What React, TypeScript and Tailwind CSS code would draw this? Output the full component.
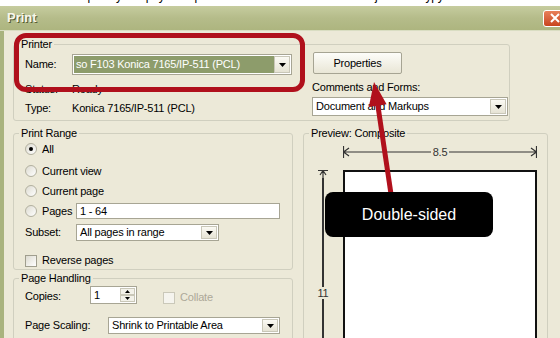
import React from 'react';

function Tri({ up }: { up?: boolean }) {
  return (
    <svg width="7" height="4" viewBox="0 0 7 4">
      <path d={up ? 'M0 4h7L3.5 0z' : 'M0 0h7L3.5 4z'} fill="#000" />
    </svg>
  );
}

function DropBtn() {
  return (
    <div className="flex h-full w-[16px] shrink-0 items-center justify-center border border-[#c9c7b8] bg-gradient-to-b from-[#fbfaf4] to-[#e6e3d4]">
      <Tri />
    </div>
  );
}

function Select({ className, text, hl }: { className: string; text: string; hl?: boolean }) {
  return (
    <div className={`flex items-center border border-[#a7a594] bg-white p-[1px] ${className}`}>
      <span
        className={`flex h-full flex-1 items-center overflow-hidden whitespace-nowrap pl-[2px] ${
          hl ? 'bg-[#8d9c6b] text-white' : ''
        }`}
      >
        {text}
      </span>
      <DropBtn />
    </div>
  );
}

function Radio({ on }: { on?: boolean }) {
  return (
    <div className="flex h-[12px] w-[12px] shrink-0 items-center justify-center rounded-full border border-[#b2b09f] bg-gradient-to-br from-[#dddbd0] to-white">
      {on && <div className="h-[4px] w-[4px] rounded-full bg-black" />}
    </div>
  );
}

function Check({ off }: { off?: boolean }) {
  return (
    <div
      className={`h-[12px] w-[12px] shrink-0 border ${
        off ? 'border-[#cac8b9] bg-[#f5f4ee]' : 'border-[#a09e8e] bg-gradient-to-br from-[#dddbd0] to-white'
      }`}
    />
  );
}

function Group({ title, className, children }: { title: string; className: string; children: React.ReactNode }) {
  return (
    <fieldset className={`rounded-[3px] border border-[#d0cfbf] ${className}`}>
      <legend className="ml-[5px] px-[2px] leading-[13px]">{title}</legend>
      {children}
    </fieldset>
  );
}

function RadioRow({ label, on, className }: { label: string; on?: boolean; className: string }) {
  return (
    <div className={`flex h-[16px] items-center gap-[5px] pl-[11px] ${className}`}>
      <Radio on={on} />
      <span>{label}</span>
    </div>
  );
}

export default function App() {
  return (
    <div className="relative h-[338px] w-[560px] overflow-hidden bg-white font-['Liberation_Sans',Arial,sans-serif] text-[11px] tracking-[-0.2px] text-black">
      {/* page text above the dialog, cut off */}
      <div className="h-[6px] overflow-hidden bg-white">
        <div className="-mt-[11px] flex whitespace-nowrap text-[12px] leading-[14px]">
          <span className="ml-[10px]">the button</span>
          <span className="ml-[26px]">p</span>
          <span className="ml-[22px]">y</span>
          <span className="ml-[24px]">pay</span>
          <span className="ml-[30px]">p</span>
          <span className="ml-[174px]">j</span>
          <span className="ml-[48px]">ypy</span>
        </div>
      </div>

      {/* title bar */}
      <div className="flex h-[25px] items-center justify-between border-b border-[#d9ddc2] bg-gradient-to-b from-[#c6cc9f] via-[#b5bc8a] to-[#adb57f] pl-[7px]">
        <span className="text-[13px] font-bold tracking-normal text-[#f7f7ec] [text-shadow:1px_1px_0_#555b33]">
          Print
        </span>
        <div className="mr-[-6px] flex h-[17px] w-[23px] items-center justify-center rounded-[3px] border border-white bg-gradient-to-b from-[#e8805a] to-[#c8441c]">
          <svg width="10" height="10" viewBox="0 0 10 10">
            <path d="M1 1l8 8M9 1l-8 8" stroke="#fff" strokeWidth="2" />
          </svg>
        </div>
      </div>

      {/* dialog body */}
      <div className="flex h-full flex-col border-l-[4px] border-[#a9b37e] bg-[#ece9d8] pl-[9px] pt-[7px]">
        <Group title="Printer" className="w-[497px]">
          <div className="flex">
            <div className="w-[278px] pl-[11px] pt-[3px] pb-[5px]">
              <div className="flex h-[21px] items-center">
                <span className="w-[47px]">Name:</span>
                <Select className="h-[21px] w-[220px]" text="so F103 Konica 7165/IP-511 (PCL)" hl />
              </div>
              <div className="mt-[7px] flex h-[14px] items-center">
                <span className="w-[47px]">Status:</span>
                <span>Ready</span>
              </div>
              <div className="mt-[5px] flex h-[14px] items-center">
                <span className="w-[47px]">Type:</span>
                <span>Konica 7165/IP-511 (PCL)</span>
              </div>
            </div>
            <div className="ml-[20px] w-[197px]">
              <div className="ml-[1px] mt-[1px] flex h-[22px] w-[89px] items-center justify-center rounded-[2px] border border-[#a6a493] bg-gradient-to-b from-[#fdfdf9] to-[#e9e6d6]">
                Properties
              </div>
              <div className="mt-[6px] flex h-[14px] items-center">Comments and Forms:</div>
              <Select className="mt-[3px] h-[19px] w-[196px]" text="Document and Markups" />
            </div>
          </div>
        </Group>

        <div className="mt-[6px] flex">
          <div className="flex w-[280px] flex-col">
            <Group title="Print Range" className="w-[280px] pb-[2px]">
              <RadioRow label="All" on className="mt-[1px]" />
              <RadioRow label="Current view" className="mt-[6px]" />
              <RadioRow label="Current page" className="mt-[4px]" />
              <div className="mt-[4px] flex h-[16px] items-center pl-[11px]">
                <Radio />
                <span className="ml-[5px] w-[34px]">Pages</span>
                <div className="flex h-[16px] w-[204px] items-center border border-[#a7a594] bg-white pl-[3px]">1 - 64</div>
              </div>
              <div className="mt-[5px] flex h-[17px] items-center pl-[11px]">
                <span className="w-[51px]">Subset:</span>
                <Select className="h-[17px] w-[143px]" text="All pages in range" />
              </div>
              <div className="mt-[13px] flex h-[13px] items-center gap-[5px] pl-[11px]">
                <Check />
                <span>Reverse pages</span>
              </div>
            </Group>

            <Group title="Page Handling" className="mt-[2px] w-[280px] pb-[10px]">
              <div className="mt-[1px] flex h-[18px] items-center pl-[11px]">
                <span className="w-[65px] pt-[3px]">Copies:</span>
                <div className="flex h-[18px] w-[47px] border border-[#a7a594] bg-white">
                  <span className="flex flex-1 items-center pl-[3px]">1</span>
                  <div className="m-[1px] flex w-[15px] flex-col">
                    <div className="flex flex-1 items-center justify-center border border-[#c9c7b8] bg-[#f3f2ea]">
                      <svg width="5" height="3" viewBox="0 0 5 3"><path d="M0 3h5L2.5 0z" fill="#000" /></svg>
                    </div>
                    <div className="flex flex-1 items-center justify-center border border-[#c9c7b8] bg-[#f3f2ea]">
                      <svg width="5" height="3" viewBox="0 0 5 3"><path d="M0 0h5L2.5 3z" fill="#000" /></svg>
                    </div>
                  </div>
                </div>
                <div className="ml-[26px] flex items-center gap-[5px] pt-[5px] text-[#aca899]">
                  <Check off />
                  <span>Collate</span>
                </div>
              </div>
              <div className="mt-[13px] flex h-[17px] items-center pl-[11px]">
                <span className="w-[83px]">Page Scaling:</span>
                <Select className="h-[17px] w-[172px]" text="Shrink to Printable Area" />
              </div>
            </Group>
          </div>

          <Group title="Preview: Composite" className="ml-[10px] w-[245px]">
            <div className="mt-[6px] flex h-[12px] items-center pl-[39px] text-[#333]">
              <svg width="88" height="12" viewBox="0 0 88 12">
                <path d="M0.5 0v12M0.5 6H88M0.5 6L6 2M0.5 6L6 10" stroke="#333" strokeWidth="1.2" fill="none" />
              </svg>
              <span className="w-[18px] text-center leading-[12px]">8.5</span>
              <svg width="88" height="12" viewBox="0 0 88 12">
                <path d="M87.5 0v12M0 6H87.5M87.5 6L82 2M87.5 6L82 10" stroke="#333" strokeWidth="1.2" fill="none" />
              </svg>
            </div>
            <div className="mt-[12px] flex pl-[14px]">
              <div className="flex w-[10px] flex-col items-center text-[#333]">
                <svg width="10" height="8" viewBox="0 0 10 8">
                  <path d="M0 0.5h10M5 0.5V8M5 0.5L2 5M5 0.5L8 5" stroke="#333" strokeWidth="1.2" fill="none" />
                </svg>
                <div className="h-[109px] w-[1.5px] bg-[#333]" />
                <span className="leading-[12px]">11</span>
                <div className="h-[60px] w-[1.5px] bg-[#333]" />
              </div>
              <div className="ml-[15px] h-[200px] w-[194px] border-2 border-[#111] bg-white" />
            </div>
          </Group>
        </div>
      </div>

      {/* red highlight around the printer name */}
      <div className="absolute left-[14px] top-[33px] h-[59px] w-[291px] rounded-[12px] border-[5px] border-[#b0101c]" />

      {/* red arrow */}
      <svg className="absolute left-[360px] top-[78px]" width="40" height="120" viewBox="0 0 40 120">
        <path d="M17.8 27 L31 116" stroke="#b0101c" strokeWidth="5" />
        <path d="M14 4 L26.6 26.3 L8.8 29.1 Z" fill="#b0101c" />
      </svg>

      {/* callout */}
      <div className="absolute left-[325px] top-[192px] flex h-[45px] w-[168px] items-center justify-center rounded-[8px] bg-black text-[16px] tracking-normal text-white">
        Double-sided
      </div>
    </div>
  );
}
